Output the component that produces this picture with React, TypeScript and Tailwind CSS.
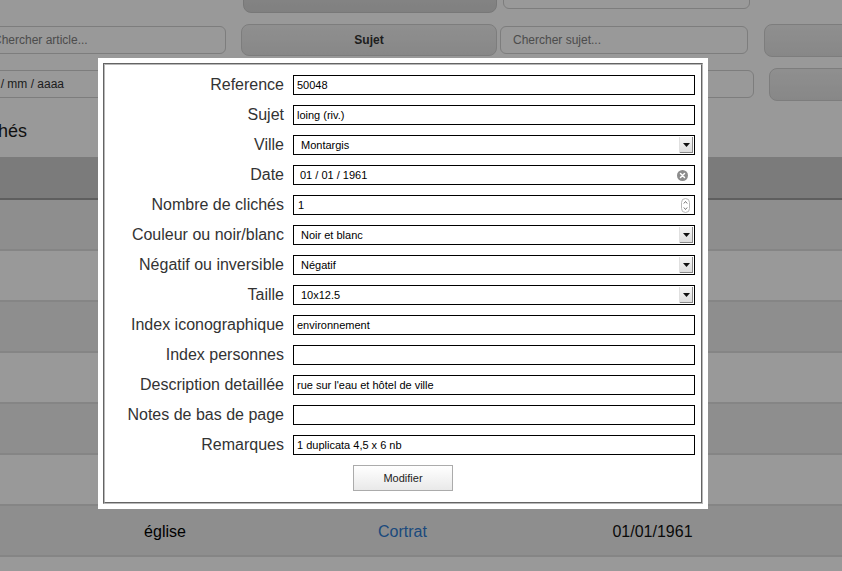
import React from "react";

type Field = { label: string; value: string; kind: "text" | "select" | "date" | "number" };

const fields: Field[] = [
  { label: "Reference", value: "50048", kind: "text" },
  { label: "Sujet", value: "loing (riv.)", kind: "text" },
  { label: "Ville", value: "Montargis", kind: "select" },
  { label: "Date", value: "01 / 01 / 1961", kind: "date" },
  { label: "Nombre de clichés", value: "1", kind: "number" },
  { label: "Couleur ou noir/blanc", value: "Noir et blanc", kind: "select" },
  { label: "Négatif ou inversible", value: "Négatif", kind: "select" },
  { label: "Taille", value: "10x12.5", kind: "select" },
  { label: "Index iconographique", value: "environnement", kind: "text" },
  { label: "Index personnes", value: "", kind: "text" },
  { label: "Description detaillée", value: "rue sur l'eau et hôtel de ville", kind: "text" },
  { label: "Notes de bas de page", value: "", kind: "text" },
  { label: "Remarques", value: "1 duplicata 4,5 x 6 nb", kind: "text" },
];

// rows under the modal stay empty, only the 7th one shows
const rows = [
  ["", "", ""],
  ["", "", ""],
  ["", "", ""],
  ["", "", ""],
  ["", "", ""],
  ["", "", ""],
  ["église", "Cortrat", "01/01/1961"],
  ["", "", ""],
];

function SelectArrow() {
  return (
    <div className="absolute right-[1px] top-[1px] bottom-[1px] w-[14px] flex items-center justify-center bg-gradient-to-b from-[#f8f8f8] to-[#dcdcdc] border-l border-[#e0e0e0] shadow-[inset_-1px_-1px_0_#8a8a8a]">
      <svg width="7" height="4" viewBox="0 0 7 4">
        <path d="M0 0h7L3.5 4z" fill="#111" />
      </svg>
    </div>
  );
}

function ClearIcon() {
  return (
    <svg className="absolute right-[6px] top-[4px]" width="11" height="11" viewBox="0 0 11 11">
      <circle cx="5.5" cy="5.5" r="5.5" fill="#8c8c8c" />
      <path d="M3.5 3.5l4 4M7.5 3.5l-4 4" stroke="#fff" strokeWidth="1.5" strokeLinecap="round" />
    </svg>
  );
}

function Spinner() {
  return (
    <svg className="absolute right-[4px] top-[2px]" width="9" height="15" viewBox="0 0 9 15">
      <rect x="0.5" y="0.5" width="8" height="14" rx="4" fill="#fff" stroke="#b8b8b8" />
      <path d="M2.8 5.5l1.7-2 1.7 2M2.8 9.5l1.7 2 1.7-2" fill="none" stroke="#666" strokeWidth="0.9" />
    </svg>
  );
}

function FieldBox({ f }: { f: Field }) {
  const pad =
    f.kind === "select" ? "pl-[7px]" : f.kind === "date" ? "pl-[6px]" : f.kind === "number" ? "pl-[4px]" : "pl-[3px]";
  return (
    <div className={`relative w-[402px] h-[20px] border border-black bg-white flex items-center ${pad} text-[11px] text-black`}>
      <span className="leading-none">{f.value}</span>
      {f.kind === "select" && <SelectArrow />}
      {f.kind === "date" && <ClearIcon />}
      {f.kind === "number" && <Spinner />}
    </div>
  );
}

function Modal() {
  return (
    <div className="absolute left-[98px] top-[58px] w-[610px] h-[451px] bg-white p-[5px]">
      <fieldset className="h-full border-2 [border-style:groove] border-[#b8b8b8] pt-[5px] px-0">
        {fields.map((f) => (
          <div key={f.label} className="h-[30px] flex items-center">
            <label className="w-[179px] pr-[9px] text-right text-[16px] text-[#333] whitespace-nowrap box-content">
              {f.label}
            </label>
            <FieldBox f={f} />
          </div>
        ))}
        <div className="flex justify-center mt-[5px]">
          <button className="w-[100px] h-[26px] border border-[#ababab] bg-gradient-to-b from-white to-[#e9e9e9] text-[11px] text-[#222]">
            Modifier
          </button>
        </div>
      </fieldset>
    </div>
  );
}

export default function App() {
  return (
    <div className="relative w-[842px] h-[571px] overflow-hidden bg-white font-['Liberation_Sans',Arial,sans-serif]">
      <div className="-mt-[26px]">
        {/* search rows */}
        <div className="h-[44px] flex items-center">
          <div className="shrink-0 ml-[243px] w-[254px] h-[34px] rounded-[8px] bg-gradient-to-b from-[#e2e2e2] to-[#d6d6d6] border border-[#c8c8c8] flex items-center justify-center text-[12px] font-bold text-white">
            Rechercher clichés
          </div>
          <div className="shrink-0 ml-[6px] w-[247px] h-[30px] rounded-[6px] border border-[#d0d0d0] mt-[-4px]" />
        </div>
        <div className="h-[44px] flex items-center">
          <div className="shrink-0 -ml-[20px] w-[246px] h-[28px] rounded-[6px] border border-[#d0d0d0] flex items-center pl-[12px] text-[12px] text-[#808080]">
            Chercher article...
          </div>
          <div className="shrink-0 ml-[15px] w-[256px] h-[32px] rounded-[8px] bg-gradient-to-b from-[#efefef] to-[#e2e2e2] border border-[#d0d0d0] flex items-center justify-center text-[12px] font-bold text-[#333]">
            Sujet
          </div>
          <div className="shrink-0 ml-[3px] w-[248px] h-[28px] rounded-[6px] border border-[#d0d0d0] flex items-center pl-[12px] text-[12px] text-[#808080]">
            Chercher sujet...
          </div>
          <div className="shrink-0 ml-[16px] w-[200px] h-[33px] rounded-[8px] bg-gradient-to-b from-[#efefef] to-[#e2e2e2] border border-[#d0d0d0]" />
        </div>
        <div className="h-[44px] flex items-center">
          <div className="shrink-0 -ml-[21px] w-[247px] h-[28px] rounded-[6px] border border-[#d0d0d0] flex items-center pl-[12px] text-[12px] text-[#333]">
            jj / mm / aaaa
          </div>
          <div className="shrink-0 ml-[277px] w-[251px] h-[28px] rounded-[6px] border border-[#d0d0d0]" />
          <div className="shrink-0 ml-[15px] w-[200px] h-[33px] rounded-[8px] bg-gradient-to-b from-[#efefef] to-[#e2e2e2] border border-[#d0d0d0]" />
        </div>

        <div className="h-[51px] flex items-center -ml-[122px] text-[18px] text-[#1c1c1c] whitespace-nowrap">
          Nombre de clichés
        </div>

        {/* table */}
        <div className="h-[43px] bg-[#cdcdcd] border-b-2 border-[#9d9d9d]" />
        {rows.map((r, i) => (
          <div
            key={i}
            className={`h-[51px] border-b-2 border-[#dedede] flex items-center pl-[40px] pt-[3px] text-[16px] ${
              i % 2 === 0 ? "bg-[#ededed]" : "bg-white"
            }`}
          >
            <span className="w-[250px] text-center text-black">{r[0]}</span>
            <span className="w-[225px] text-center text-[#2f7bd0]">{r[1]}</span>
            <span className="w-[275px] text-center text-[#111]">{r[2]}</span>
          </div>
        ))}
      </div>

      <div className="absolute inset-0 bg-black/40" />
      <Modal />
    </div>
  );
}
